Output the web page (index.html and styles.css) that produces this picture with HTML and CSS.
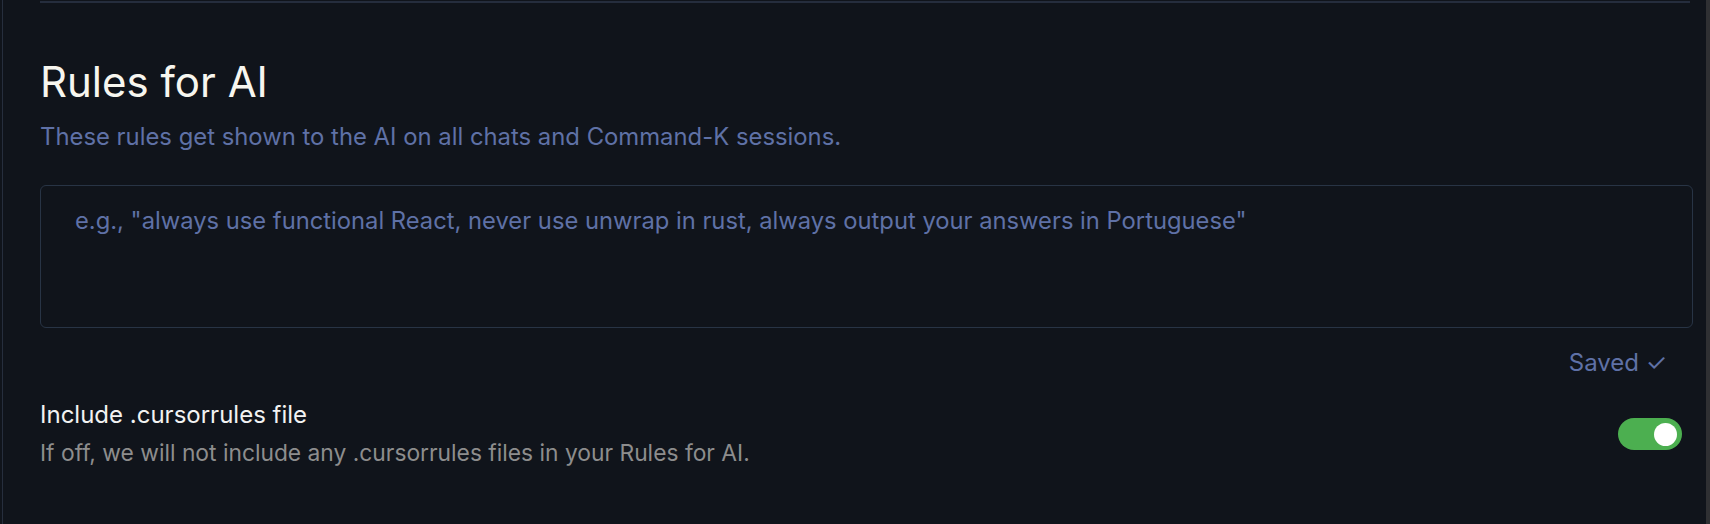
FILE: index.html
```html
<!DOCTYPE html>
<html>
<head>
<meta charset="utf-8">
<link rel="stylesheet" href="styles.css">
</head>
<body>
<div class="frame">
  <main class="panel">
    <hr class="divider">
    <section class="rules">
      <h1 class="title">Rules for AI</h1>
      <p class="subtitle">These rules get shown to the AI on all chats and Command-K sessions.</p>
      <div class="textarea">
        <span class="placeholder">e.g., "always use functional React, never use unwrap in rust, always output your answers in Portuguese"</span>
      </div>
      <div class="status">Saved ✓</div>
      <div class="setting">
        <div class="setting-text">
          <div class="setting-title">Include .cursorrules file</div>
          <div class="setting-desc">If off, we will not include any .cursorrules files in your Rules for AI.</div>
        </div>
        <div class="toggle"><span class="knob"></span></div>
      </div>
    </section>
  </main>
  <div class="scrollbar"></div>
</div>
</body>
</html>
```
FILE: styles.css
```css
html, body {
  margin: 0;
  padding: 0;
  background: #10141b;
  height: 100%;
  overflow: hidden;
}
body {
  font-family: Inter, "Noto Sans", sans-serif;
}
.frame {
  display: flex;
  height: 524px;
  padding-left: 2px;
}
.panel {
  flex: 1;
  border-left: 1px solid #262e3d;
  padding-left: 37px;
  padding-right: 13px;
  padding-top: 1px;
}
.scrollbar {
  width: 4px;
  background: #2f3033;
}
.divider {
  margin: 0 3px 0 0;
  border: none;
  height: 2px;
  background: #252d3d;
}
.rules {
  display: flex;
  flex-direction: column;
}
.title {
  margin: 54px 0 0 0;
  font-size: 42px;
  font-weight: 400;
  color: #f7f6ef;
  line-height: 50px;
}
.subtitle {
  margin: 14px 0 0 0;
  font-size: 23.85px;
  color: #5f71a6;
  line-height: 32px;
}
.textarea {
  margin-top: 32px;
  border: 1px solid #283445;
  border-radius: 6px;
  box-sizing: border-box;
  height: 143px;
  padding: 19px 34px 18px;
}
.placeholder {
  font-size: 23.75px;
  color: #5f71a6;
  line-height: 32px;
}
.status {
  align-self: flex-end;
  margin: 19px 26px 0 0;
  font-size: 24px;
  color: #5f71a6;
  line-height: 32px;
}
.setting {
  display: flex;
  align-items: center;
  justify-content: space-between;
  margin-top: 21px;
}
.setting-title {
  font-size: 24px;
  color: #f2f2f2;
  line-height: 30px;
}
.setting-desc {
  margin-top: 8px;
  font-size: 22.8px;
  color: #8d8d8d;
  line-height: 30px;
}
.toggle {
  width: 64px;
  height: 32px;
  border-radius: 16px;
  background: #4caf50;
  display: flex;
  align-items: center;
  justify-content: flex-end;
  padding-right: 5px;
  box-sizing: border-box;
  margin-right: 11px;
}
.knob {
  width: 23px;
  height: 23px;
  border-radius: 50%;
  background: #ffffff;
}
```
